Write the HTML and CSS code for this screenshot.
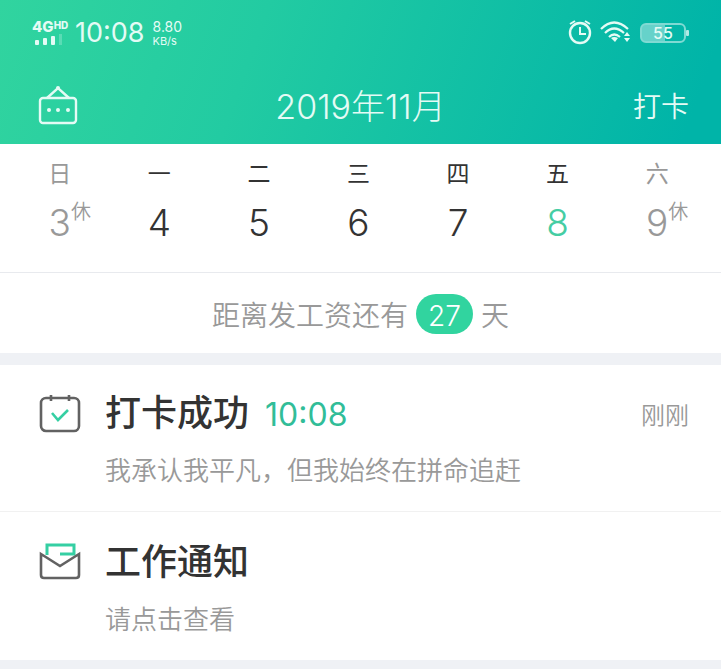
FILE: index.html
```html
<!DOCTYPE html>
<html lang="zh-CN">
<head>
  <meta charset="UTF-8" />
  <meta name="viewport" content="width=device-width, initial-scale=1" />
  <title>2019年11月 打卡</title>
  <link rel="stylesheet" href="styles.css">
</head>
<body>
  <header class="topo">
    <div class="status">
      <div class="rede">
        <div class="rede-tipo">4G<sup>HD</sup></div>
        <svg width="30" height="12" viewBox="0 0 30 12" fill="#e4fbf5">
          <rect x="3" y="6" width="4" height="5" rx="1" />
          <rect x="11" y="4" width="4" height="7" rx="1" />
          <rect x="19" y="2" width="4" height="9" rx="1" />
          <rect x="27" y="0" width="3" height="11" opacity="0.25" />
        </svg>
      </div>
      <span class="hora">10:08</span>
      <div class="velocidade">
        <div class="valor">8.80</div>
        <div class="unidade">KB/s</div>
      </div>
      <div class="status-icones">
        <!-- alarme -->
        <svg width="24" height="26" viewBox="0 0 24 26" fill="none" stroke="#e4fbf5" stroke-width="2">
          <circle cx="12" cy="13" r="10" stroke-width="2.4" />
          <path d="M12 7v7h6M2 4l5-3M22 4l-5-3" />
        </svg>
        <!-- wifi -->
        <svg width="32" height="24" viewBox="0 0 32 24" fill="none" stroke="#e4fbf5" stroke-width="2.2">
          <path d="M1 8Q14-5 28 8M5 12Q14 3 24 12M9 16Q14 11 20 16" />
          <path d="M11 17q3-2 7 0l-3 4zM24 15l3-4 3 4zM24 17l3 4 3-4z" fill="#e4fbf5" stroke="none" />
        </svg>
        <div class="bateria">55</div>
      </div>
    </div>
    <div class="barra">
      <button class="botao-calendario" aria-label="日历">
        <svg width="40" height="40" viewBox="0 0 40 40" fill="none" stroke="#e4fbf5" stroke-width="2.4">
          <rect x="2" y="13" width="36" height="25" rx="3" />
          <path d="M9 13L20 3l11 10" />
          <circle cx="20" cy="3" r="2" fill="#e4fbf5" stroke="none" />
          <g fill="#e4fbf5" stroke="none">
            <circle cx="11" cy="25" r="2" />
            <circle cx="20" cy="25" r="2" />
            <circle cx="30" cy="25" r="2" />
          </g>
        </svg>
      </button>
      <h1>2019年11月</h1>
      <button class="botao-ponto">打卡</button>
    </div>
  </header>

  <main>
    <section class="semana">
      <table>
        <thead>
          <tr>
            <th class="folga">日</th>
            <th>一</th>
            <th>二</th>
            <th>三</th>
            <th>四</th>
            <th>五</th>
            <th class="folga">六</th>
          </tr>
        </thead>
        <tbody>
          <tr>
            <td class="folga"><span class="dia">3<span class="marca">休</span></span></td>
            <td>4</td>
            <td>5</td>
            <td>6</td>
            <td>7</td>
            <td class="hoje">8</td>
            <td class="folga"><span class="dia">9<span class="marca">休</span></span></td>
          </tr>
        </tbody>
      </table>
    </section>

    <section class="salario">
      <span>距离发工资还有</span>
      <span class="dias">27</span>
      <span>天</span>
    </section>

    <section class="lista">
      <article class="item">
        <svg class="icone" width="42" height="40" viewBox="0 0 42 40" fill="none" stroke="#626262">
          <rect x="2" y="5" width="38" height="33" rx="5" stroke-width="2.6" />
          <path d="M12 2v6M30 2v6" stroke-width="2.6" />
          <path d="M13 20l6 7 10-10" stroke="#35cfa3" stroke-width="2.6" />
        </svg>
        <div class="texto">
          <div class="linha">
            <h2>打卡成功</h2>
            <span class="horario">10:08</span>
            <span class="quando">刚刚</span>
          </div>
          <p>我承认我平凡，但我始终在拼命追赶</p>
        </div>
      </article>

      <article class="item">
        <svg class="icone" width="42" height="40" viewBox="0 0 42 40" fill="none" stroke="#626262">
          <path d="M8 13V3h27v9H21" stroke="#35cfa3" stroke-width="3" />
          <path d="M2 12v21q0 3 3 3h32q3 0 3-3V12L21 24z" stroke-width="2.6" />
        </svg>
        <div class="texto">
          <div class="linha">
            <h2>工作通知</h2>
          </div>
          <p>请点击查看</p>
        </div>
      </article>
    </section>
  </main>
</body>
</html>
```

FILE: styles.css
```css
* { box-sizing: border-box; }
body {
  margin: 0; background: #eff1f5; color: #333;
  font-family: Inter, 'Noto Sans CJK SC', sans-serif;
}
h1, h2, p { margin: 0; }
svg { display: block; }
button { padding: 0; border: none; background: none; color: inherit; font: inherit; cursor: pointer; }

/* topo */
.topo { background: linear-gradient(110deg, #31d49f 0%, #22cba2 35%, #00b4a8 95%); color: #e4fbf5; }
.status { display: flex; align-items: center; height: 64px; padding: 2px 32px 0; }
.rede { width: 34px; margin-right: 9px; }
.rede-tipo { display: flex; font-size: 15px; line-height: 14px; font-weight: 800; }
.rede-tipo sup { font-size: 10px; line-height: 10px; }
.hora { font-size: 27px; line-height: 32px; margin-right: 8px; }
.valor { font-size: 14px; line-height: 16px; }
.unidade { font-size: 11px; line-height: 12px; }
.status-icones { display: flex; align-items: center; gap: 8px; margin-left: auto; margin-right: 3px; }
.bateria {
  position: relative; width: 46px; height: 20px; border: 2px solid #80dad3; border-radius: 6px;
  background: linear-gradient(90deg, #66d2ca 55%, transparent 55%);
  font-size: 16px; line-height: 16px; font-weight: 500; text-align: center;
}
.bateria::after {
  content: ''; position: absolute; right: -5px; top: 5px;
  width: 3px; height: 6px; border-radius: 1px; background: #b0eae4;
}
.barra {
  display: grid; grid-template-columns: 1fr auto 1fr; align-items: center;
  height: 80px; padding: 2px 32px 0;
}
.barra h1 { padding-top: 3px; font-size: 34px; line-height: 40px; font-weight: 300; }
.botao-calendario { justify-self: start; margin-left: 6px; }
.botao-ponto { justify-self: end; padding-top: 3px; font-size: 28px; line-height: 40px; font-weight: 350; }

/* semana */
.semana { background: #fff; padding: 12px 14px 24px 10px; border-bottom: 1px solid #e8eaee; }
.semana table { width: 100%; table-layout: fixed; border-collapse: collapse; text-align: center; }
.semana th { padding: 0; font-size: 23px; line-height: 36px; font-weight: 400; }
.semana td { padding: 7px 0 1px; font-size: 37px; line-height: 48px; font-weight: 350; }
.semana .folga { color: #999; }
.semana .hoje { color: #45cda3; }
.dia { position: relative; }
.marca { position: absolute; left: 100%; top: 0; font-size: 20px; line-height: 24px; }

/* contagem do salario */
.salario {
  display: flex; align-items: center; justify-content: center; gap: 8px;
  height: 80px; padding-top: 2px; margin-bottom: 12px; background: #fff;
  color: #999; font-size: 28px; line-height: 36px; font-weight: 350;
}
.salario span { padding-top: 4px; }
.salario .dias { padding: 4px 12px 0; border-radius: 20px; background: #31d49f; color: #fff; font-weight: 300; }

/* avisos */
.item { display: flex; height: 146px; padding: 24px 32px 0 39px; background: #fff; }
.item + .item { height: 149px; padding-top: 26px; border-top: 1px solid #f1f1f1; }
.icone { flex: none; margin: 4px 24px 0 0; }
.texto { flex: 1; }
.linha { display: flex; align-items: center; height: 48px; margin-bottom: 16px; }
.linha h2 { font-size: 36px; line-height: 48px; font-weight: 500; }
.horario { margin-left: 16px; padding-top: 4px; font-size: 32px; line-height: 40px; color: #31bd98; }
.quando { margin-left: auto; font-size: 24px; font-weight: 350; color: #999; }
.texto p { font-size: 26px; line-height: 36px; font-weight: 350; color: #999; }
```
